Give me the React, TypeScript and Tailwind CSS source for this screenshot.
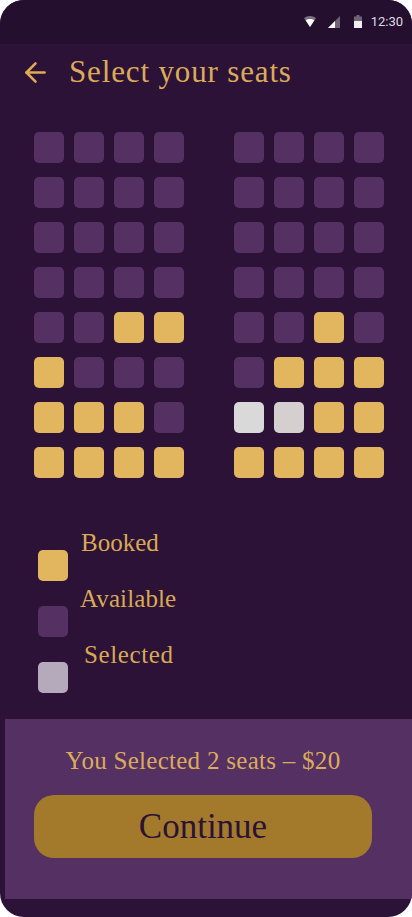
import { ArrowLeft } from 'lucide-react';

// a = available, b = booked, w / g = the two selected seats
const leftSeats = ['aaaa', 'aaaa', 'aaaa', 'aaaa', 'aabb', 'baaa', 'bbba', 'bbbb'];
const rightSeats = ['aaaa', 'aaaa', 'aaaa', 'aaaa', 'aaba', 'abbb', 'wgbb', 'bbbb'];

const seatColors: Record<string, string> = {
  a: 'bg-[#543063]',
  b: 'bg-[#e2b55f]',
  w: 'bg-[#d9d9d9]',
  g: 'bg-[#d6cfd0]',
};

function SeatBlock({ rows }: { rows: string[] }) {
  return (
    <div className="grid grid-cols-4 gap-x-[10px] gap-y-[14px]">
      {rows.join('').split('').map((seat, i) => (
        <div key={i} className={`h-[31px] w-[30px] rounded-[5px] ${seatColors[seat]}`} />
      ))}
    </div>
  );
}

function LegendRow({ label, color, offset }: { label: string; color: string; offset: string }) {
  return (
    <div className="flex h-[51px] justify-between w-[150px]">
      <div className={`h-[31px] w-[30px] self-end rounded-[5px] ${color}`} />
      <span className={`h-[26px] flex-1 text-[25px] leading-[26px] text-[#d9a955] ${offset}`}>{label}</span>
    </div>
  );
}

function StatusIcons() {
  return (
    <>
      <svg width="12" height="11" viewBox="0 0 12 11" className="mr-[12px]">
        <path d="M0 2.2C1.7.8 3.8 0 6 0s4.300.8 6 2.200L6 11z" fill="#fff" fillOpacity="0.4" />
        <path d="M1.700 4.300C3 3.400 4.400 3 6 3s3 .4 4.300 1.300L6 11z" fill="#fff" />
      </svg>
      <svg width="12" height="12" viewBox="0 0 12 12" className="mr-[14px]">
        <path d="M12 0v12H0z" fill="#fff" fillOpacity="0.35" />
        <path d="M7 5v7H0z" fill="#fff" />
      </svg>
      <svg width="8" height="13" viewBox="0 0 8 13" className="mr-[9px]">
        <path d="M2.500 0h3v1.500H8V13H0V1.500h2.500z" fill="#fff" fillOpacity="0.35" />
        <path d="M0 6h8v7H0z" fill="#fff" fillOpacity="0.9" />
      </svg>
    </>
  );
}

export default function App() {
  return (
    <div className="h-[917px] w-[412px] bg-white">
      <div className="flex h-full flex-col overflow-hidden rounded-[24px] bg-[#2b1236] font-['Liberation_Serif',serif]">
        <div className="flex h-[44px] items-center justify-end bg-[#240f2e] pr-[9px] pb-[1px]">
          <StatusIcons />
          <span className="font-['Roboto',sans-serif] text-[13px] text-[#dedbe0]">12:30</span>
        </div>

        <div className="flex h-[56px] items-center pl-[20px]">
          <ArrowLeft size={31} strokeWidth={2} className="text-[#e0aa55]" />
          <h1 className="ml-[18px] text-[31px] tracking-[0.85px] text-[#dcab5a]">Select your seats</h1>
        </div>

        <div className="mt-[32px] flex gap-[50px] pl-[34px]">
          <SeatBlock rows={leftSeats} />
          <SeatBlock rows={rightSeats} />
        </div>

        <div className="mt-[52px] flex flex-col gap-[5px] pl-[38px]">
          <LegendRow label="Booked" color="bg-[#e2b55f]" offset="ml-[13px]" />
          <LegendRow label="Available" color="bg-[#543063]" offset="ml-[12px] tracking-[0.1px]" />
          <LegendRow label="Selected" color="bg-[#b5a9bc]" offset="ml-[16px] tracking-[0.6px]" />
        </div>

        <div className="mt-[26px] ml-[5px] flex h-[180px] flex-col bg-[#543063] pl-[29px]">
          <p className="mt-[27px] w-[338px] text-center text-[25px] leading-[30px] tracking-[0.28px] text-[#dcab5a]">
            You Selected 2 seats – $20
          </p>
          <button className="mt-[19px] h-[63px] w-[338px] rounded-[20px] bg-[#a37a2c] pt-[2px] text-[35px] text-[#2b1236]">
            Continue
          </button>
        </div>
      </div>
    </div>
  );
}
